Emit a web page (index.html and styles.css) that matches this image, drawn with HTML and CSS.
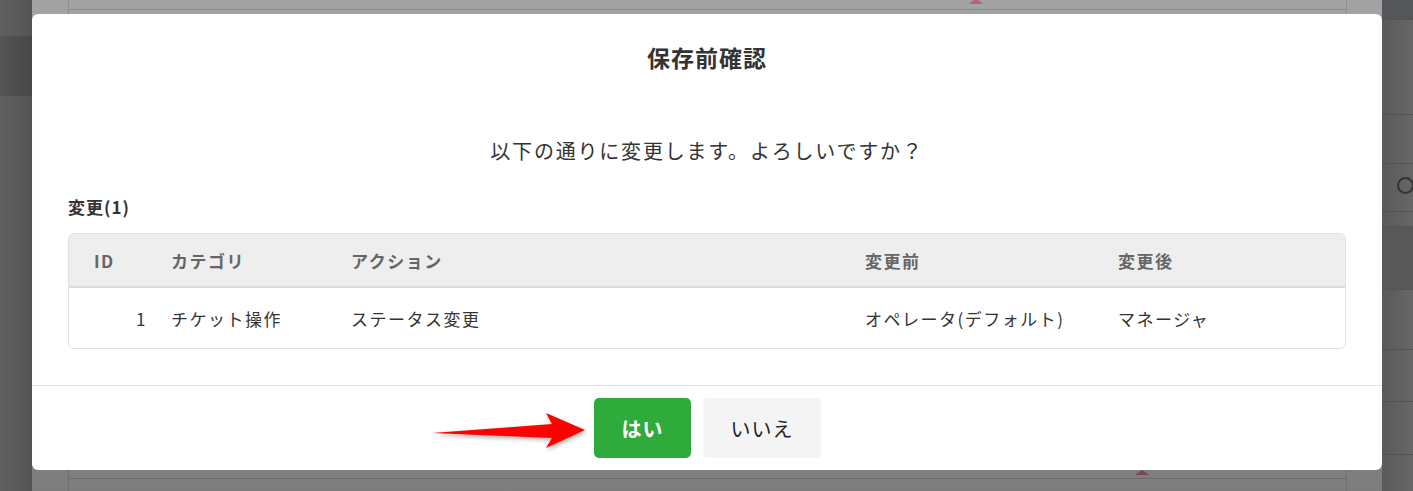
FILE: index.html
```html
<!DOCTYPE html>
<html lang="ja">
<head>
<meta charset="utf-8">
<title>保存前確認</title>
<link rel="stylesheet" href="styles.css">
</head>
<body>
<div class="backdrop">
  <div class="bd-side"><div class="bd-side-band"></div></div>
  <div class="bd-main">
    <div class="bd-top"><div class="bd-line"></div><span class="bd-tri tri-top"></span></div>
    <div class="bd-fill"></div>
    <div class="bd-bottom"><span class="bd-tri tri-bottom"></span><div class="bd-line"></div></div>
  </div>
  <div class="bd-right">
    <div class="bd-r-head"></div>
    <div class="bd-r-row h95"></div>
    <div class="bd-r-row h49"></div>
    <div class="bd-r-row h48"><span class="bd-search"></span></div>
    <div class="bd-r-row h15"></div>
    <div class="bd-r-row dark h63"></div>
    <div class="bd-r-row h60"></div>
    <div class="bd-r-row h52"></div>
    <div class="bd-r-row h53"></div>
    <div class="bd-r-row h19"></div>
  </div>
</div>

<div class="modal">
  <header class="modal-header">
    <h1 class="modal-title">保存前確認</h1>
  </header>
  <div class="modal-body">
    <p class="message">以下の通りに変更します。よろしいですか？</p>
    <h2 class="section-label">変更(1)</h2>
    <div class="table-wrap">
      <table class="changes">
        <colgroup>
          <col class="c-id"><col class="c-cat"><col class="c-act"><col class="c-before"><col class="c-after">
        </colgroup>
        <thead>
          <tr><th class="id">ID</th><th>カテゴリ</th><th>アクション</th><th>変更前</th><th>変更後</th></tr>
        </thead>
        <tbody>
          <tr><td class="id">1</td><td>チケット操作</td><td>ステータス変更</td><td>オペレータ(デフォルト)</td><td>マネージャ</td></tr>
        </tbody>
      </table>
    </div>
  </div>
  <footer class="modal-footer">
    <button class="btn btn-yes">はい</button>
    <button class="btn btn-no">いいえ</button>
  </footer>
  <svg class="arrow" width="170" height="50" viewBox="0 0 170 50" aria-hidden="true">
    <path d="M7 28 L127 19 L121 8 L160 25 L121 43 L127 33 Z" fill="#ff0000"/>
  </svg>
</div>
</body>
</html>
```

FILE: styles.css
```css
* { box-sizing: border-box; }
html, body {
  margin: 0;
  padding: 0;
  width: 1413px;
  height: 491px;
  overflow: hidden;
}
body {
  font-family: "Noto Sans CJK JP", "Noto Sans", sans-serif;
  color: #333;
  background: #7a7a7a;
  position: relative;
}

/* ---------- dimmed page behind the dialog ---------- */
.backdrop {
  display: flex;
  width: 1413px;
  height: 491px;
}
.bd-side {
  width: 32px;
  background: linear-gradient(90deg, #606060, #545454);
  padding-top: 36px;
  position: relative;
}
.bd-side-band {
  height: 60px;
  background: linear-gradient(90deg, #555, #474747);
}
.bd-main {
  flex: 1;
  display: flex;
  flex-direction: column;
  background: linear-gradient(180deg, #a3a3a3 0%, #8f8f8f 50%, #7d7d7d 100%);
}
.bd-top {
  height: 14px;
  margin-left: 36px;
  border-left: 1px solid #8e8e8e;
  margin-right: 35px;
  border-right: 1px solid #8e8e8e;
  padding-top: 9px;
  position: relative;
}
.bd-line {
  height: 1px;
  background: #8b8b8b;
}
.bd-fill { flex: 1; }
.bd-bottom {
  height: 21px;
  margin-left: 36px;
  border-left: 1px solid #6e6e6e;
  margin-right: 35px;
  border-right: 1px solid #6e6e6e;
  padding-top: 8px;
  position: relative;
}
.bd-bottom .bd-line { background: #6a6a6a; }
.bd-tri {
  position: absolute;
  width: 0;
  height: 0;
  border-left: 7px solid transparent;
  border-right: 7px solid transparent;
}
.tri-top {
  left: 900px;
  top: -2px;
  border-bottom: 6px solid #b06483;
}
.tri-bottom {
  left: 1066px;
  top: 0;
  border-bottom: 5px solid #7a4558;
}
.bd-right {
  width: 31px;
  background: linear-gradient(90deg, #5a5a5a, #666);
  display: flex;
  flex-direction: column;
}
.bd-r-head { height: 19px; background: #555659; }
.bd-r-row { border-top: 1px solid #535353; position: relative; }
.bd-r-row.dark { background: #585858; }
.h95 { height: 95px; }
.h49 { height: 49px; }
.h48 { height: 48px; }
.h15 { height: 15px; }
.h63 { height: 63px; }
.h60 { height: 60px; }
.h52 { height: 52px; }
.h53 { height: 53px; }
.h19 { height: 19px; }
.bd-search {
  position: absolute;
  left: 15px;
  top: 13px;
  width: 17px;
  height: 17px;
  border: 2px solid #333;
  border-radius: 50%;
}

/* ---------- dialog ---------- */
.modal {
  position: absolute;
  left: 32px;
  top: 14px;
  width: 1350px;
  height: 456px;
  background: #fff;
  border-radius: 6px;
  display: flex;
  flex-direction: column;
}
.modal-header {
  padding-top: 28px;
  text-align: center;
}
.modal-title {
  margin: 0;
  font-size: 23px;
  line-height: 30px;
  font-weight: 700;
  letter-spacing: 1px;
  color: #333;
}
.modal-body {
  padding: 64px 36px 0;
  flex: 1;
}
.message {
  margin: 0;
  text-align: center;
  font-size: 20px;
  line-height: 30px;
  letter-spacing: 1.8px;
  color: #333;
}
.section-label {
  margin: 29px 0 14px;
  font-size: 17px;
  line-height: 24px;
  font-weight: 700;
  letter-spacing: 1px;
  color: #333;
}
.table-wrap {
  border: 1px solid #e2e2e2;
  border-radius: 6px;
  overflow: hidden;
}
.changes {
  width: 100%;
  border-collapse: collapse;
  table-layout: fixed;
  font-size: 17px;
  letter-spacing: 1.5px;
}
.c-id { width: 90px; }
.c-cat { width: 180px; }
.c-act { width: 514px; }
.c-before { width: 253px; }
.changes th {
  height: 53px;
  background: #eeeeee;
  border-bottom: 2px solid #dcdcdc;
  color: #666;
  font-weight: 700;
  text-align: left;
  padding: 0 12px;
}
.changes td {
  height: 61px;
  padding: 0 12px;
  color: #333;
  text-align: left;
}
.changes th.id { padding-left: 25px; }
.changes td.id { text-align: right; }

.modal-footer {
  height: 85px;
  border-top: 1px solid #e5e5e5;
  display: flex;
  justify-content: center;
  align-items: center;
  gap: 12px;
}
.btn {
  height: 60px;
  border: 0;
  border-radius: 5px;
  font-family: inherit;
  font-size: 20px;
  letter-spacing: 1px;
  padding: 0 27px 0 28px;
}
.btn-yes {
  background: #2eab3a;
  color: #fff;
  font-weight: 700;
}
.btn-no {
  background: #f4f4f4;
  color: #222;
}
.arrow {
  position: absolute;
  left: 393px;
  top: 391px;
  filter: drop-shadow(1px 2px 2px rgba(0,0,0,0.35));
}
```
